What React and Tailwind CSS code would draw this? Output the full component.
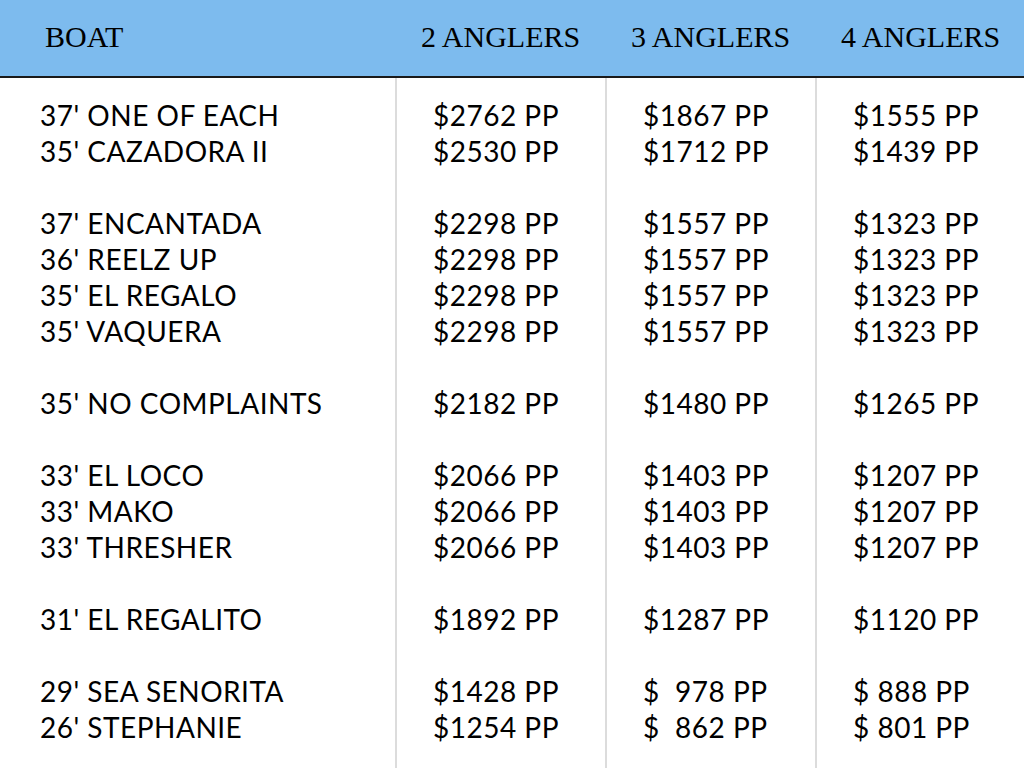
const rows = [
  ["37' ONE OF EACH", "$2762 PP", "$1867 PP", "$1555 PP"],
  ["35' CAZADORA II", "$2530 PP", "$1712 PP", "$1439 PP"],
  null,
  ["37' ENCANTADA", "$2298 PP", "$1557 PP", "$1323 PP"],
  ["36' REELZ UP", "$2298 PP", "$1557 PP", "$1323 PP"],
  ["35' EL REGALO", "$2298 PP", "$1557 PP", "$1323 PP"],
  ["35' VAQUERA", "$2298 PP", "$1557 PP", "$1323 PP"],
  null,
  ["35' NO COMPLAINTS", "$2182 PP", "$1480 PP", "$1265 PP"],
  null,
  ["33' EL LOCO", "$2066 PP", "$1403 PP", "$1207 PP"],
  ["33' MAKO", "$2066 PP", "$1403 PP", "$1207 PP"],
  ["33' THRESHER", "$2066 PP", "$1403 PP", "$1207 PP"],
  null,
  ["31' EL REGALITO", "$1892 PP", "$1287 PP", "$1120 PP"],
  null,
  ["29' SEA SENORITA", "$1428 PP", "$  978 PP", "$ 888 PP"],
  ["26' STEPHANIE", "$1254 PP", "$  862 PP", "$ 801 PP"],
]

const heads = ["BOAT", "2 ANGLERS", "3 ANGLERS", "4 ANGLERS"]

export default function App() {
  return (
    <div className="h-[768px] w-[1024px] overflow-hidden bg-white text-black">
      <div className="grid h-[78px] grid-cols-[395px_210px_210px_209px] border-b-2 border-[#1a1a1a] bg-[#7dbbee] font-['Liberation_Serif',serif] text-[30px] leading-none">
        {heads.map((h, i) => (
          <div key={h} className={`flex items-center pb-[2px] ${i === 0 ? 'pl-[45px]' : 'pl-[26px]'}`}>
            {h}
          </div>
        ))}
      </div>
      <div className="grid h-[690px] grid-cols-[395px_210px_210px_209px] font-['Lato',sans-serif] text-[28px] leading-[36px] tracking-[0.5px]">
        {[0, 1, 2, 3].map((c) => (
          <div key={c} className={`pt-[19px] ${c === 0 ? 'pl-[40px]' : 'border-l-2 border-[#dcdcdc] pl-[36px]'}`}>
            {rows.map((r, i) => (
              <div key={i} className="h-[36px] whitespace-pre">
                {r ? r[c] : ''}
              </div>
            ))}
          </div>
        ))}
      </div>
    </div>
  )
}
